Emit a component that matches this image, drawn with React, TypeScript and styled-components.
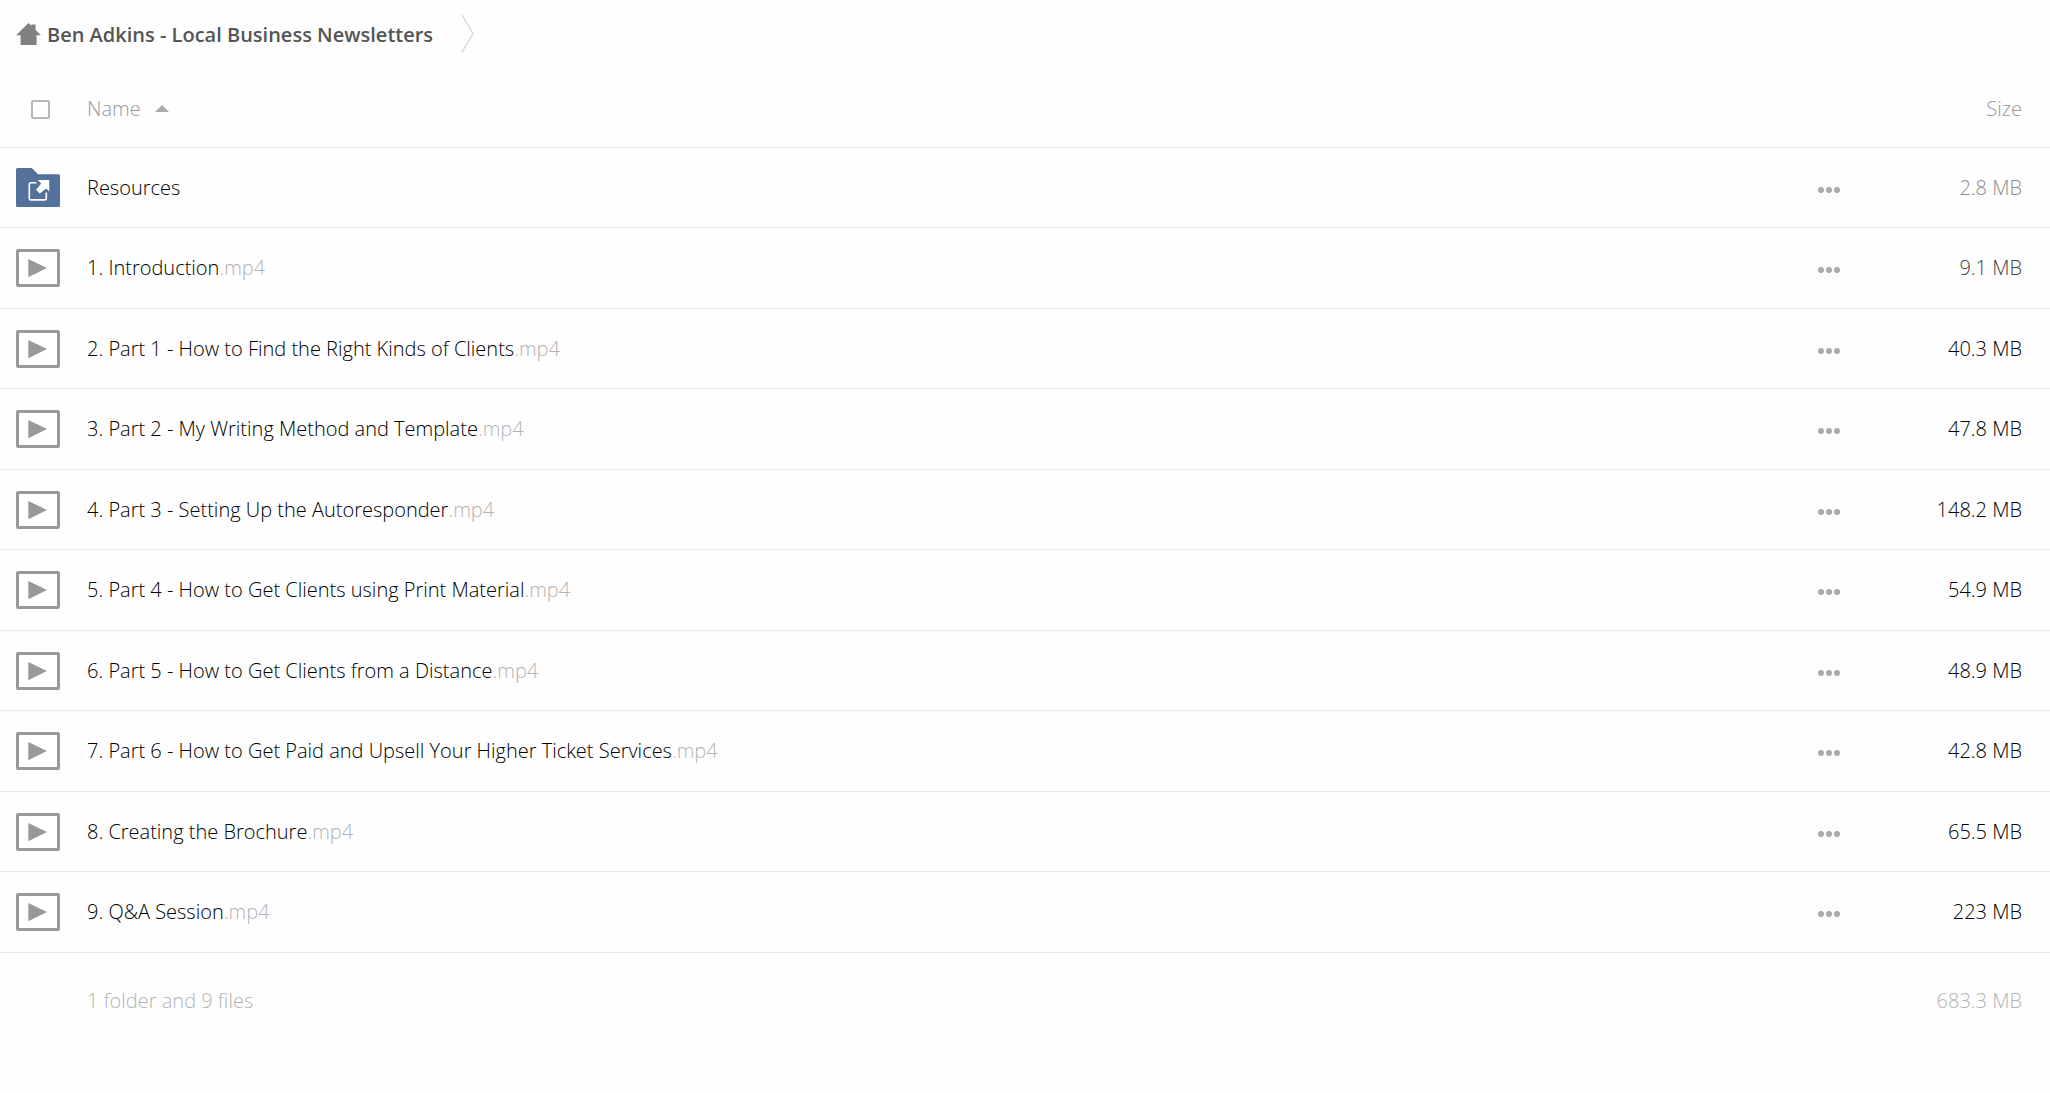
import React from "react";
import styled, { createGlobalStyle } from "styled-components";

const GlobalStyle = createGlobalStyle`
  * { box-sizing: border-box; }
  body {
    margin: 0;
    background: #fefefe;
    color: #222;
    font-family: "Open Sans", "Noto Sans", sans-serif;
    font-size: 20px;
    font-weight: 300;
    line-height: 28px;
  }
`;

const Breadcrumb = styled.nav`
  display: flex;
  align-items: center;
  height: 70px;
  padding: 0 16px;
`;

const Crumb = styled.a`
  display: flex;
  align-items: center;
  gap: 6px;
  color: #555;
  font-weight: 600;
  text-decoration: none;
`;

const CrumbArrow = styled.svg`
  margin-left: 28px;
`;

const FileTable = styled.table`
  width: 100%;
  table-layout: fixed;
  border-collapse: separate;
  border-spacing: 0;
`;

const IconCol = styled.col`
  width: 87px;
`;
const ActionCol = styled.col`
  width: 82px;
`;
const SizeCol = styled.col`
  width: 180px;
`;

const HeadRow = styled.tr`
  height: 78px;
`;

const HeadCell = styled.th<{ $end?: boolean }>`
  padding: ${(p) => (p.$end ? "0 28px 0 0" : "0")};
  border-bottom: 1px solid #e9e9e9;
  color: #999;
  font-weight: 300;
  text-align: ${(p) => (p.$end ? "right" : "left")};
`;

const CheckCell = styled(HeadCell)`
  padding: 2px 0 0 31px;
`;

const CheckBox = styled.input`
  appearance: none;
  display: block;
  width: 19px;
  height: 19px;
  margin: 0;
  border: 2px solid #b8b8b8;
  border-radius: 2px;
  background: #fff;
  &:checked { background: #999; }
`;

const SortButton = styled.button`
  display: flex;
  align-items: center;
  gap: 14px;
  padding: 0;
  border: 0;
  background: none;
  color: inherit;
  font: inherit;
  cursor: pointer;
`;

const Row = styled.tr`
  height: 80px;
  &:nth-child(even) { height: 81px; }
`;

const Cell = styled.td`
  padding: 0;
  border-bottom: 1px solid #e9e9e9;
`;

const IconCell = styled(Cell)`
  padding-left: 16px;
  svg { display: block; }
`;

const ActionCell = styled(Cell)`
  padding-top: 4px;
`;

const SizeCell = styled(Cell)<{ $tone: string }>`
  padding-right: 28px;
  color: ${(p) => p.$tone};
  text-align: right;
`;

const NameLink = styled.a`
  color: #000;
  text-decoration: none;
`;

const Extension = styled.span`
  color: #b3b3b3;
`;

const MoreButton = styled.button`
  display: flex;
  justify-content: center;
  gap: 2px;
  margin: 0 auto;
  padding: 8px;
  border: 0;
  background: none;
  cursor: pointer;
`;

const Dot = styled.span`
  width: 6px;
  height: 6px;
  border-radius: 50%;
  background: #aaa;
`;

const FootRow = styled.tr`
  height: 96px;
`;

const FootCell = styled.td<{ $end?: boolean }>`
  padding: ${(p) => (p.$end ? "0 28px 0 0" : "0")};
  color: #b3b3b3;
  text-align: ${(p) => (p.$end ? "right" : "left")};
`;

const HomeIcon = () => (
  <svg width="25" height="24" viewBox="0 0 25 24" aria-hidden="true">
    <path
      fill="#808080"
      d="M12.5 0 L15.4 2.8 V1.5 H19.5 V6.8 L25 12.3 H20.6 V22 H4.6 V12.3 H0 Z"
    />
  </svg>
);

const FolderIcon = () => (
  <svg width="44" height="39" viewBox="0 0 44 39" aria-hidden="true">
    <path
      fill="#54719b"
      d="M1.5 0 H15.8 L22 6.3 H42.5 Q44 6.3 44 7.8 V37.5 Q44 39 42.5 39 H1.5 Q0 39 0 37.5 V1.5 Q0 0 1.5 0 Z"
    />
    <path
      d="M20.5 14.7 H15 Q13.3 14.7 13.3 16.4 V30.2 Q13.3 31.9 15 31.9 H28.6 Q30.3 31.9 30.3 30.2 V24.5"
      fill="none"
      stroke="#fff"
      strokeWidth="1.6"
    />
    <path fill="#fff" d="M21.8 12 H33.2 V23.4 L30.2 20.4 L23.8 25.5 L20 21.7 L25.2 15.4 Z" />
  </svg>
);

const VideoIcon = () => (
  <svg width="44" height="38" viewBox="0 0 44 38" aria-hidden="true">
    <rect x="1.5" y="1.5" width="41" height="35" rx="0.5" fill="#fff" stroke="#999" strokeWidth="3" />
    <path fill="#999" d="M12.3 10 L31 19 L12.3 28.3 Z" />
  </svg>
);

type Entry = { name: string; ext?: string; size: string; tone?: string };

const entries: Entry[] = [
  { name: "Resources", size: "2.8 MB", tone: "#8c8c8c" },
  { name: "1. Introduction", ext: ".mp4", size: "9.1 MB", tone: "#444" },
  { name: "2. Part 1 - How to Find the Right Kinds of Clients", ext: ".mp4", size: "40.3 MB" },
  { name: "3. Part 2 - My Writing Method and Template", ext: ".mp4", size: "47.8 MB" },
  { name: "4. Part 3 - Setting Up the Autoresponder", ext: ".mp4", size: "148.2 MB" },
  { name: "5. Part 4 - How to Get Clients using Print Material", ext: ".mp4", size: "54.9 MB" },
  { name: "6. Part 5 - How to Get Clients from a Distance", ext: ".mp4", size: "48.9 MB" },
  { name: "7. Part 6 - How to Get Paid and Upsell Your Higher Ticket Services", ext: ".mp4", size: "42.8 MB" },
  { name: "8. Creating the Brochure", ext: ".mp4", size: "65.5 MB" },
  { name: "9. Q&A Session", ext: ".mp4", size: "223 MB" },
];

export default function App() {
  return (
    <>
      <GlobalStyle />
      <Breadcrumb aria-label="Breadcrumb">
        <Crumb href="#">
          <HomeIcon />
          Ben Adkins - Local Business Newsletters
        </Crumb>
        <CrumbArrow width="13" height="42" viewBox="0 0 13 42" aria-hidden="true">
          <path d="M0.8 0.5 L12 19.5 L0.8 38.5" fill="none" stroke="#d5d5d5" strokeWidth="1.3" />
        </CrumbArrow>
      </Breadcrumb>
      <FileTable>
        <colgroup>
          <IconCol />
          <col />
          <ActionCol />
          <SizeCol />
        </colgroup>
        <thead>
          <HeadRow>
            <CheckCell>
              <CheckBox type="checkbox" aria-label="Select all" />
            </CheckCell>
            <HeadCell aria-sort="ascending">
              <SortButton type="button">
                Name
                <svg width="14" height="7" viewBox="0 0 14 7" aria-hidden="true">
                  <path d="M0 7 L7 0 L14 7 Z" fill="#aaa" />
                </svg>
              </SortButton>
            </HeadCell>
            <HeadCell />
            <HeadCell $end>Size</HeadCell>
          </HeadRow>
        </thead>
        <tbody>
          {entries.map((entry) => (
            <Row key={entry.name}>
              <IconCell>{entry.ext ? <VideoIcon /> : <FolderIcon />}</IconCell>
              <Cell>
                <NameLink href="#">
                  {entry.name}
                  {entry.ext && <Extension>{entry.ext}</Extension>}
                </NameLink>
              </Cell>
              <ActionCell>
                <MoreButton type="button" aria-label={`More actions for ${entry.name}`}>
                  <Dot />
                  <Dot />
                  <Dot />
                </MoreButton>
              </ActionCell>
              <SizeCell $tone={entry.tone ?? "#000"}>{entry.size}</SizeCell>
            </Row>
          ))}
        </tbody>
        <tfoot>
          <FootRow>
            <FootCell />
            <FootCell>1 folder and 9 files</FootCell>
            <FootCell />
            <FootCell $end>683.3 MB</FootCell>
          </FootRow>
        </tfoot>
      </FileTable>
    </>
  );
}
